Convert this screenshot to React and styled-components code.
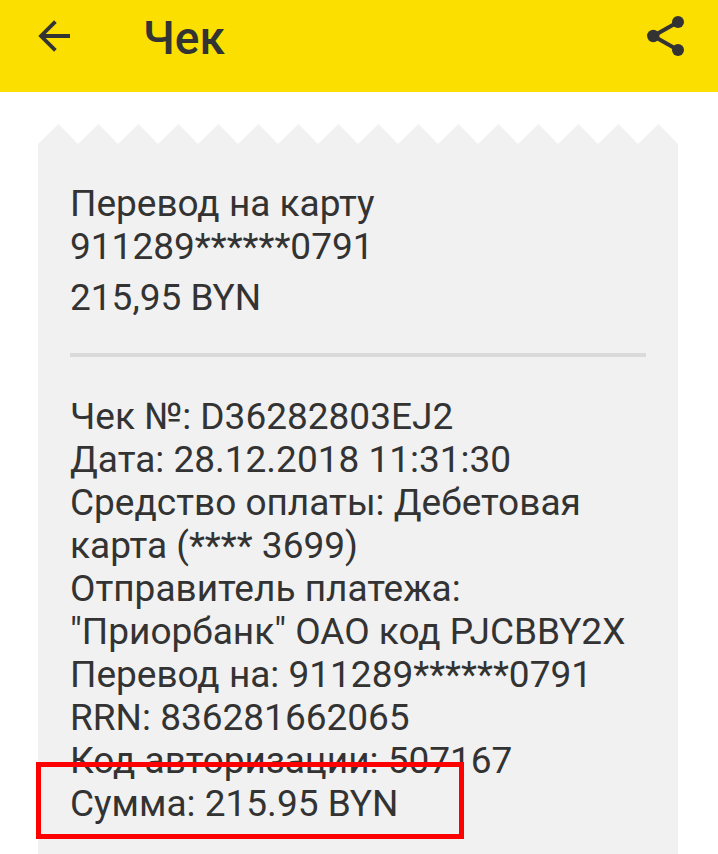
import React from "react";
import styled, { createGlobalStyle } from "styled-components";

const GlobalStyle = createGlobalStyle`
  * { box-sizing: border-box; }
  body { margin: 0; background: #fff; color: #333; font-family: Roboto, "Noto Sans", sans-serif; }
`;

const Screen = styled.div`
  min-height: 100vh;
  display: flex;
  flex-direction: column;
  overflow: hidden;
`;

const TopBar = styled.header`
  display: flex;
  align-items: center;
  height: 92px;
  padding: 0 30px 20px;
  background: #fadf00;
`;

const IconButton = styled.button`
  display: flex;
  align-items: center;
  justify-content: center;
  width: 48px;
  height: 48px;
  padding: 0;
  border: 0;
  background: transparent;
  color: #333;
`;

const Title = styled.h1`
  flex: 1;
  margin: 4px 0 0 65px;
  font-size: 46px;
  line-height: 54px;
  font-weight: 500;
`;

const Content = styled.main`
  flex: 1;
  display: flex;
  flex-direction: column;
  padding: 32px 40px 0 38px;
`;

const TornEdge = styled.svg`
  display: block;
  width: 100%;
  height: 20px;
  color: #f1f1f1;
`;

const Receipt = styled.section`
  flex: 1;
  padding: 38px 32px 28px;
  background: #f1f1f1;
  font-size: 37px;
  line-height: 43px;
`;

const Line = styled.p`
  margin: 0;
`;

const Amount = styled.p`
  margin: 8px 0 0;
`;

const Divider = styled.hr`
  height: 4px;
  margin: 34px 0 38px;
  border: 0;
  background: #dadada;
`;

const MarkedLine = styled.p`
  position: relative;
  width: fit-content;
  margin: 0;
`;

const Marker = styled.span`
  position: absolute;
  top: -20px;
  right: -66px;
  bottom: -14px;
  left: -34px;
  border: 5px solid #ff0000;
  pointer-events: none;
`;

const details = [
  "Чек №: D36282803EJ2",
  "Дата: 28.12.2018 11:31:30",
  "Средство оплаты: Дебетовая карта (**** 3699)",
  'Отправитель платежа: "Приорбанк" ОАО код PJCBBY2X',
  "Перевод на: 911289******0791",
  "RRN: 836281662065",
  "Код авторизации: 507167",
];

export default function App() {
  return (
    <Screen>
      <GlobalStyle />
      <TopBar>
        <IconButton type="button" aria-label="Назад">
          <svg width="48" height="48" viewBox="0 0 48 48" fill="none" stroke="currentColor" strokeWidth="3.8">
            <path d="M40 24H12M25.4 9.6 11 24l14.4 14.4" />
          </svg>
        </IconButton>
        <Title>Чек</Title>
        <IconButton type="button" aria-label="Поделиться">
          <svg width="48" height="48" viewBox="0 0 48 48" fill="currentColor">
            <path d="M38 10 13.3 24 38 38" fill="none" stroke="currentColor" strokeWidth="4" />
            <circle cx="38" cy="10" r="6" />
            <circle cx="13.3" cy="24" r="6.2" />
            <circle cx="38" cy="38" r="6" />
          </svg>
        </IconButton>
      </TopBar>
      <Content>
        <TornEdge aria-hidden="true">
          <defs>
            <pattern id="teeth" width="40" height="20" patternUnits="userSpaceOnUse">
              <path d="M0 20 20.6 0 40 20Z" fill="currentColor" />
            </pattern>
          </defs>
          <rect width="100%" height="20" fill="url(#teeth)" />
        </TornEdge>
        <Receipt>
          <Line>Перевод на карту 911289******0791</Line>
          <Amount>215,95 BYN</Amount>
          <Divider />
          {details.map((text) => (
            <Line key={text}>{text}</Line>
          ))}
          <MarkedLine>
            Сумма: 215.95 BYN
            <Marker />
          </MarkedLine>
        </Receipt>
      </Content>
    </Screen>
  );
}
